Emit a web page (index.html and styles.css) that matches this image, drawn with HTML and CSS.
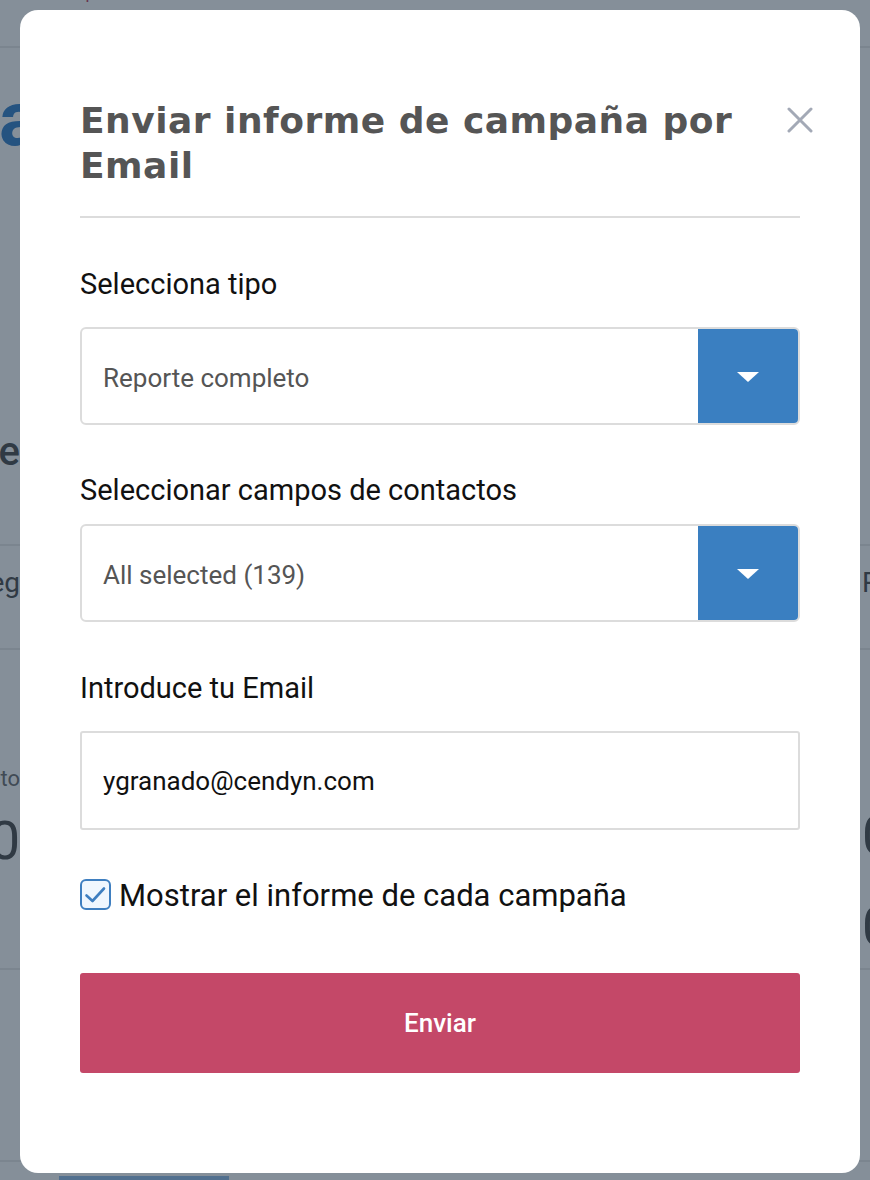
FILE: index.html
```html
<!DOCTYPE html>
<html>
<head>
    <title>Enviar informe de campaña</title>
    <link rel="stylesheet" href="styles.css">
</head>
<body>
    <!-- pagina de fondo, tapada por el modal -->
    <div class="page">
        <div class="crumbs"><span class="crumb-text">Informes /</span> <span class="crumb-link">plantillas</span></div>
        <div class="row hero"><h1 class="cell-left hero-title">Campaña</h1></div>
        <div class="row"><h2 class="cell-left section-title">Gene</h2></div>
        <div class="row stats-head">
            <span class="cell-left">Categ</span>
            <span></span>
            <span class="cell-right">Rebotes</span>
        </div>
        <div class="row stats-body">
            <div class="cell-left">
                <small class="stat-label">Contacto</small>
                <strong class="stat-value">100</strong>
            </div>
            <div></div>
            <div class="cell-right">
                <strong class="stat-value">0</strong>
                <strong class="stat-value">0</strong>
            </div>
        </div>
        <div class="row stats-foot">
            <span class="tab"></span>
        </div>
    </div>

    <div class="overlay">
        <form class="modal" id="report-form">
            <div class="modal-header">
                <h2 class="modal-title">Enviar informe de campaña por Email</h2>
                <button type="button" class="close-btn" aria-label="Cerrar">
                    <svg width="26" height="26" viewBox="0 0 26 26">
                        <path d="M2 2 L24 24 M24 2 L2 24" stroke="#a3a9b6" stroke-width="3" stroke-linecap="round"/>
                    </svg>
                </button>
            </div>

            <div class="form-group">
                <label for="tipo">Selecciona tipo</label>
                <div class="select-box" id="tipo">
                    <span class="select-value">Reporte completo</span>
                    <span class="select-arrow"></span>
                </div>
            </div>

            <div class="form-group form-group-fields">
                <label for="campos">Seleccionar campos de contactos</label>
                <div class="select-box" id="campos">
                    <span class="select-value">All selected (139)</span>
                    <span class="select-arrow"></span>
                </div>
            </div>

            <div class="form-group form-group-email">
                <label for="email">Introduce tu Email</label>
                <input type="text" id="email" class="text-input" value="ygranado@cendyn.com">
            </div>

            <label class="check-row">
                <span class="check-box">
                    <svg width="26" height="26" viewBox="0 0 26 26">
                        <path d="M3.5 14.5 L9.5 20 L21 7.5" fill="none" stroke="#3f7fc0" stroke-width="2.6" stroke-linecap="round" stroke-linejoin="round"/>
                    </svg>
                </span>
                <span class="check-text">Mostrar el informe de cada campaña</span>
            </label>

            <button type="submit" class="send-btn">Enviar</button>
        </form>
    </div>
</body>
</html>
```

FILE: styles.css
```css
body {
  margin: 0;
  padding: 0;
  font-family: Roboto, "Liberation Sans", sans-serif;
  background-color: #fff;
  overflow: hidden;
  height: 1180px;
}

/* ---- fondo ---- */
.page {
  margin: 0 -210px 0 -200px;
}

.crumbs {
  height: 65px;
  margin-top: -17px;
  padding-left: 200px;
  font-size: 17px;
  line-height: 20px;
  color: #999;
  border-bottom: 2px solid #ebebeb;
  box-sizing: border-box;
}

.crumb-text {
  margin-left: 2px;
}

.crumb-link {
  color: #c44868;
}

.row {
  display: grid;
  grid-template-columns: 220px 1fr 220px;
}

.cell-left {
  text-align: right;
  margin: 0;
}

.cell-right {
  text-align: left;
  padding-left: 2px;
}

.hero {
  height: 120px;
}

.hero-title {
  font-size: 76px;
  font-weight: bold;
  color: #3f86cc;
  line-height: 100px;
  margin-top: 21px;
}

.section-title {
  margin: 259px 0 0;
  font-size: 40px;
  font-weight: 500;
  color: #555;
  line-height: 50px;
}

.stats-head {
  margin-top: 67px;
  height: 106px;
  box-sizing: border-box;
  padding-top: 20px;
  align-items: start;
  font-size: 28px;
  color: #555;
  border-top: 2px solid #ebebeb;
  border-bottom: 2px solid #ebebeb;
}

.stats-body {
  height: 320px;
  border-bottom: 2px solid #ebebeb;
  box-sizing: border-box;
}

.stat-label {
  display: block;
  margin-top: 116px;
  font-size: 22px;
  color: #777;
}

.stat-value {
  display: block;
  font-size: 54px;
  font-weight: 400;
  color: #555;
  line-height: 64px;
}

.cell-left .stat-value {
  margin-top: 18px;
}

.stats-body .cell-right .stat-value:first-child {
  margin-top: 154px;
}

.stats-body .cell-right .stat-value + .stat-value {
  margin-top: 27px;
}

.stats-foot {
  height: 190px;
  border-bottom: 2px solid #ebebeb;
  position: relative;
}

.tab {
  position: absolute;
  left: 259px;
  bottom: -26px;
  width: 170px;
  height: 10px;
  background-color: #99c1eb;
}

/* ---- modal ---- */
.overlay {
  position: fixed;
  top: 0;
  left: 0;
  right: 0;
  bottom: 0;
  background-color: rgba(11, 31, 51, 0.5);
}

.modal {
  margin: 10px 10px 0 20px;
  width: 840px;
  height: 1163px;
  box-sizing: border-box;
  padding: 88px 60px 0;
  background-color: #fff;
  border-radius: 18px;
}

.modal-header {
  display: flex;
  justify-content: space-between;
  align-items: flex-start;
  padding-bottom: 28px;
  border-bottom: 2px solid #dcdcdc;
}

.modal-title {
  margin: 0;
  max-width: 690px;
  font-family: "DejaVu Sans", sans-serif;
  font-size: 36px;
  font-weight: bold;
  letter-spacing: 0.5px;
  line-height: 45px;
  color: #555;
}

.close-btn {
  margin: 9px -13px 0 0;
  padding: 0;
  border: none;
  background: none;
  width: 26px;
  height: 26px;
  cursor: pointer;
}

.form-group {
  margin-top: 49px;
}

.form-group-fields {
  margin-top: 48px;
}

.form-group-fields label {
  margin-bottom: 17px;
}

.form-group-email {
  margin-top: 49px;
}

label {
  display: block;
  font-size: 29px;
  line-height: 34px;
  color: #111;
  margin-bottom: 26px;
}

.select-box {
  display: flex;
  height: 98px;
  box-sizing: border-box;
  border: 2px solid #dcdcdc;
  border-radius: 6px;
  overflow: hidden;
}

.select-value {
  flex: 1;
  display: flex;
  align-items: center;
  padding-left: 21px;
  padding-top: 3px;
  font-size: 26px;
  color: #555;
}

.select-arrow {
  width: 100px;
  background-color: #3a7fc1;
  display: flex;
  align-items: center;
  justify-content: center;
}

.select-arrow::after {
  content: "";
  border-left: 11px solid transparent;
  border-right: 11px solid transparent;
  border-top: 10px solid #fff;
  margin-top: 1px;
}

.text-input {
  display: block;
  width: 100%;
  height: 99px;
  box-sizing: border-box;
  border: 2px solid #dcdcdc;
  border-radius: 3px;
  padding: 0 21px;
  font-family: Roboto, sans-serif;
  font-size: 26px;
  color: #111;
  outline: none;
}

.check-row {
  display: flex;
  align-items: center;
  gap: 8px;
  margin: 43px 0 0;
  cursor: pointer;
}

.check-box {
  width: 31px;
  height: 31px;
  box-sizing: border-box;
  border: 2px solid #3f7fc0;
  border-radius: 6px;
  background-color: #f0f7fe;
  display: flex;
  align-items: center;
  justify-content: center;
}

.check-text {
  font-size: 31px;
  line-height: 38px;
  color: #111;
  margin-top: 4px;
}

.send-btn {
  display: block;
  width: 100%;
  height: 100px;
  margin-top: 58px;
  border: none;
  border-radius: 3px;
  background-color: #c44868;
  color: #fff;
  font-family: Roboto, sans-serif;
  font-size: 26px;
  font-weight: 500;
  cursor: pointer;
}
```
